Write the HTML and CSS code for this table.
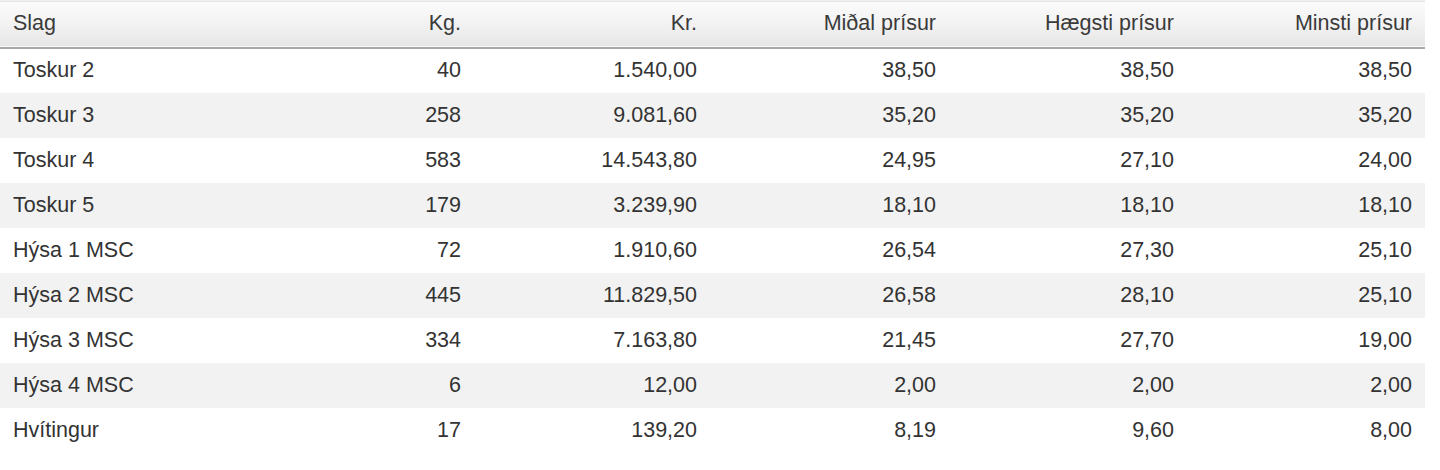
FILE: index.html
```html
<!DOCTYPE html>
<html lang="fo">
<head>
<meta charset="utf-8">
<title>Prísir</title>
<link rel="stylesheet" href="styles.css">
</head>
<body>
<table class="prices">
  <colgroup>
    <col class="c1"><col class="c2"><col class="c3"><col class="c4"><col class="c5"><col class="c6">
  </colgroup>
  <thead>
    <tr><th class="left">Slag</th><th>Kg.</th><th>Kr.</th><th>Miðal prísur</th><th>Hægsti prísur</th><th>Minsti prísur</th></tr>
  </thead>
  <tbody>
    <tr><td class="left">Toskur 2</td><td>40</td><td>1.540,00</td><td>38,50</td><td>38,50</td><td>38,50</td></tr>
    <tr><td class="left">Toskur 3</td><td>258</td><td>9.081,60</td><td>35,20</td><td>35,20</td><td>35,20</td></tr>
    <tr><td class="left">Toskur 4</td><td>583</td><td>14.543,80</td><td>24,95</td><td>27,10</td><td>24,00</td></tr>
    <tr><td class="left">Toskur 5</td><td>179</td><td>3.239,90</td><td>18,10</td><td>18,10</td><td>18,10</td></tr>
    <tr><td class="left">Hýsa 1 MSC</td><td>72</td><td>1.910,60</td><td>26,54</td><td>27,30</td><td>25,10</td></tr>
    <tr><td class="left">Hýsa 2 MSC</td><td>445</td><td>11.829,50</td><td>26,58</td><td>28,10</td><td>25,10</td></tr>
    <tr><td class="left">Hýsa 3 MSC</td><td>334</td><td>7.163,80</td><td>21,45</td><td>27,70</td><td>19,00</td></tr>
    <tr><td class="left">Hýsa 4 MSC</td><td>6</td><td>12,00</td><td>2,00</td><td>2,00</td><td>2,00</td></tr>
    <tr><td class="left">Hvítingur</td><td>17</td><td>139,20</td><td>8,19</td><td>9,60</td><td>8,00</td></tr>
  </tbody>
</table>
</body>
</html>
```
FILE: styles.css
```css
html, body {
  margin: 0;
  padding: 0;
  background: #ffffff;
}
body {
  font-family: "Liberation Sans", Arial, Helvetica, sans-serif;
  color: #333333;
}
.prices {
  width: 1425px;
  table-layout: fixed;
  border-collapse: collapse;
  border-spacing: 0;
  font-size: 21.5px;
}
.c1 { width: 237px; }
.c2 { width: 237px; }
.c3 { width: 236px; }
.c4 { width: 239px; }
.c5 { width: 238px; }
.c6 { width: 238px; }
.prices th,
.prices td {
  padding: 0 13px;
  text-align: right;
  white-space: nowrap;
  font-weight: normal;
}
.prices .left {
  text-align: left;
}
.prices thead tr {
  height: 47px;
  background: linear-gradient(to bottom, #fbfbfb 0%, #f2f2f2 50%, #e6e6e6 100%);
  border-top: 1px solid #f0f0f0;
  border-bottom: 2px solid #a8a8a8;
}
.prices thead th {
  color: #3a3a3a;
}
.prices tbody tr {
  height: 45px;
}
.prices tbody tr:nth-child(even) {
  background: #f2f2f2;
}
```
